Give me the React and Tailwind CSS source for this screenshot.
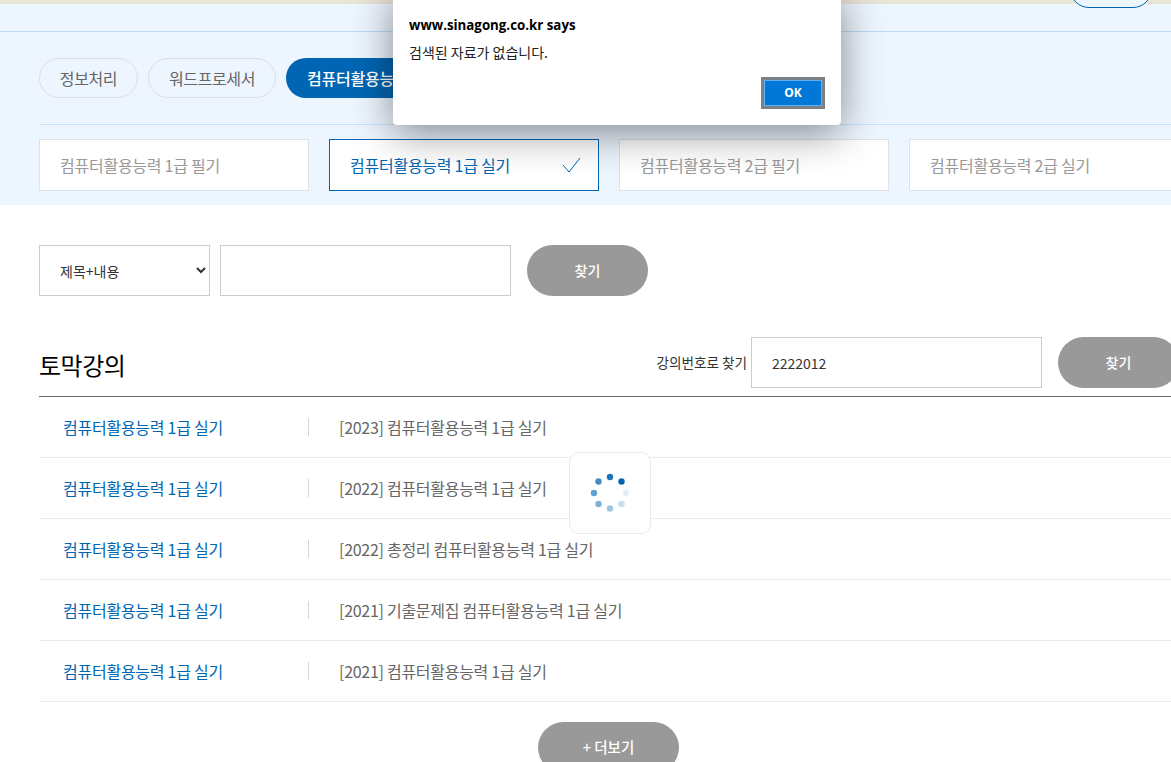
import React from 'react';

const font = 'font-["Noto_Sans_CJK_KR","Noto_Sans",sans-serif]';

const tabs = [
  { label: '컴퓨터활용능력 1급 필기' },
  { label: '컴퓨터활용능력 1급 실기', active: true },
  { label: '컴퓨터활용능력 2급 필기' },
  { label: '컴퓨터활용능력 2급 실기' },
];

const lectures = [
  '[2023] 컴퓨터활용능력 1급 실기',
  '[2022] 컴퓨터활용능력 1급 실기',
  '[2022] 총정리 컴퓨터활용능력 1급 실기',
  '[2021] 기출문제집 컴퓨터활용능력 1급 실기',
  '[2021] 컴퓨터활용능력 1급 실기',
];

const spinnerDots = [
  { cx: 40, cy: 24, o: 0.9 },
  { cx: 51.5, cy: 28.5, o: 1 },
  { cx: 56, cy: 40, o: 0.1 },
  { cx: 51.5, cy: 51, o: 0.22 },
  { cx: 40, cy: 55.5, o: 0.38 },
  { cx: 28.5, cy: 51, o: 0.5 },
  { cx: 24, cy: 40, o: 0.62 },
  { cx: 28.5, cy: 28.5, o: 0.75 },
];

const Spinner = () => (
  <div className="absolute left-[569px] top-[452px] w-[82px] h-[82px] bg-white border border-[#ebebeb] rounded-[10px]">
    <svg width="80" height="80" viewBox="0 0 80 80">
      {spinnerDots.map((d, i) => (
        <circle key={i} cx={d.cx} cy={d.cy} r="3.2" fill="#0066b3" opacity={d.o} />
      ))}
    </svg>
  </div>
);

const AlertBox = () => (
  <div className='absolute left-[393px] top-[-10px] w-[448px] h-[135px] bg-white rounded-[4px] shadow-[0_8px_40px_rgba(0,0,0,0.45)] font-["Open_Sans","Noto_Sans_CJK_KR",sans-serif]'>
    <p className="absolute left-[16px] top-[26px] text-[13.3px] leading-[18px] font-bold text-black">www.sinagong.co.kr says</p>
    <p className='absolute left-[16px] top-[53px] text-[14px] leading-[18px] text-[#222] font-["Noto_Sans_CJK_KR",sans-serif]'>검색된 자료가 없습니다.</p>
    <button className="absolute left-[368px] top-[87px] w-[64px] h-[32px] bg-[#0078d7] border-[3px] border-[#7a8288] outline outline-1 outline-offset-[-4px] outline-[#62aef0] text-white text-[12px] font-bold">
      OK
    </button>
  </div>
);

export default function App() {
  return (
    <div className={`relative w-[1171px] h-[762px] overflow-hidden bg-white ${font}`}>
      <div className="h-[205px] bg-[#edf5fe] relative">
        <div className="h-[4px] bg-[#e8e4d6]" />
        <div className="absolute left-[1070px] top-[-30px] w-[82px] h-[38px] rounded-full border border-[#0066b3] bg-[#edf5fe]" />
        <div className="h-[28px] border-b border-[#bcdcf8]" />
        <div className="pl-[39px] w-[1179px]">
          <div className="flex gap-[10px] pt-[26px] pb-[26px] border-b border-[#c6e1fa]">
            <button className="h-[40px] w-[99px] rounded-full border border-[#d9dfe6] text-[16px] tracking-[-0.4px] text-[#666]">정보처리</button>
            <button className="h-[40px] w-[128px] rounded-full border border-[#d9dfe6] text-[16px] tracking-[-0.4px] text-[#666]">워드프로세서</button>
            <button className="h-[40px] px-[21px] rounded-full bg-[#0066b3] text-[16px] tracking-[-0.2px] font-medium text-white">컴퓨터활용능력</button>
          </div>
          <div className="flex gap-[20px] pt-[14px]">
            {tabs.map((t) => (
              <div
                key={t.label}
                className={`w-[270px] h-[52px] flex items-center justify-between pl-[20px] pr-[17px] bg-white border text-[16px] tracking-[-0.25px] ${t.active ? 'border-[#0066b3] text-[#0066b3]' : 'border-[#dde2e8] text-[#999]'}`}
              >
                <span>{t.label}</span>
                {t.active && (
                  <svg width="19" height="16" viewBox="0 0 19 16" fill="none" stroke="#0066b3" strokeWidth="1">
                    <path d="M1 8l6 7L18 1" />
                  </svg>
                )}
              </div>
            ))}
          </div>
        </div>
      </div>

      <div className="pl-[39px] w-[1179px]">
        <div className="flex items-center pt-[40px]">
          <select className="w-[171px] h-[51px] pl-[16px] pr-[2px] bg-white border border-[#ccc] text-[14px] text-[#333]">
            <option>제목+내용</option>
          </select>
          <input className="ml-[10px] w-[291px] h-[51px] border border-[#ccc]" />
          <button className="ml-[16px] w-[121px] h-[51px] rounded-full bg-[#999] text-white text-[14px] font-medium">찾기</button>
        </div>

        <div className="flex items-center justify-between h-[51px] mt-[41px]">
          <h2 className="text-[24px] tracking-[-0.5px] font-normal text-black mt-[4px]">토막강의</h2>
          <div className="flex items-center">
            <span className="text-[13.6px] text-[#333] mr-[4px]">강의번호로 찾기</span>
            <input defaultValue="2222012" className="w-[291px] h-[51px] border border-[#ccc] pl-[20px] text-[14px] text-[#333]" />
            <button className="ml-[16px] w-[121px] h-[51px] rounded-full bg-[#999] text-white text-[14px] font-medium">찾기</button>
          </div>
        </div>

        <ul className="mt-[8px] border-t border-[#666]">
          {lectures.map((title, i) => (
            <li key={i} className="h-[61px] flex items-center border-b border-[#ebebeb]">
              <span className="w-[269px] pl-[24px] text-[16px] tracking-[-0.25px] text-[#0066b3]">컴퓨터활용능력 1급 실기</span>
              <span className="h-[18px] border-l border-[#d5d5d5]" />
              <span className="pl-[30px] text-[16px] tracking-[-0.28px] text-[#666]">{title}</span>
            </li>
          ))}
        </ul>
      </div>

      <div className="flex justify-center mt-[20px] w-[1217px]">
        <button className="w-[141px] h-[51px] pb-[2px] rounded-full bg-[#999] text-white text-[14.5px] font-medium">+ 더보기</button>
      </div>

      <Spinner />
      <AlertBox />
    </div>
  );
}
